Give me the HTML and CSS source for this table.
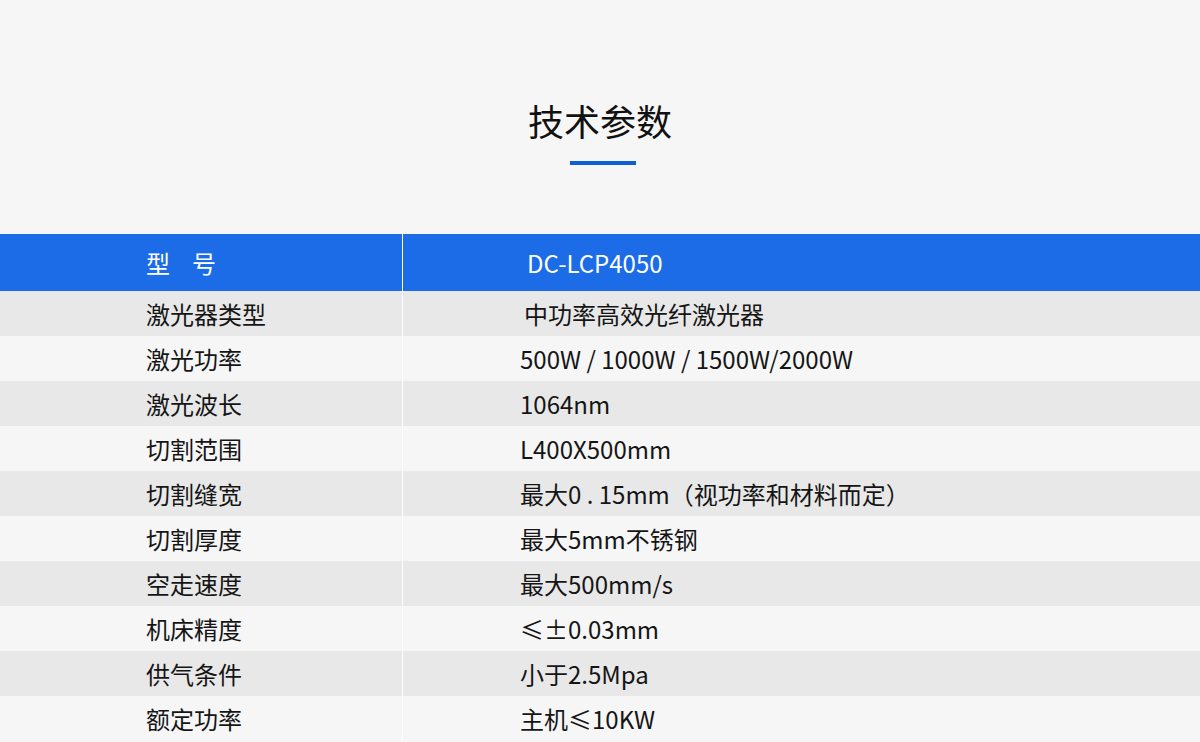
FILE: index.html
```html
<!DOCTYPE html>
<html lang="zh-CN">
<head>
<meta charset="utf-8">
<title>技术参数</title>
<link rel="stylesheet" href="styles.css">
</head>
<body>
<section class="page">
  <header class="heading">
    <h1 class="title">技术参数</h1>
    <div class="bar"></div>
  </header>
  <div class="table">
    <div class="row head"><div class="key spaced"><span>型</span><span>号</span></div><div class="val">DC-LCP4050</div></div>
    <div class="row odd"><div class="key">激光器类型</div><div class="val indent">中功率高效光纤激光器</div></div>
    <div class="row"><div class="key">激光功率</div><div class="val">500W / 1000W / 1500W/2000W</div></div>
    <div class="row odd"><div class="key">激光波长</div><div class="val">1064nm</div></div>
    <div class="row"><div class="key">切割范围</div><div class="val">L400X500mm</div></div>
    <div class="row odd"><div class="key">切割缝宽</div><div class="val">最大0 . 15mm（视功率和材料而定）</div></div>
    <div class="row"><div class="key">切割厚度</div><div class="val">最大5mm不锈钢</div></div>
    <div class="row odd"><div class="key">空走速度</div><div class="val">最大500mm/s</div></div>
    <div class="row"><div class="key">机床精度</div><div class="val">≤±0.03mm</div></div>
    <div class="row odd"><div class="key">供气条件</div><div class="val">小于2.5Mpa</div></div>
    <div class="row"><div class="key">额定功率</div><div class="val">主机≤10KW</div></div>
  </div>
</section>
</body>
</html>
```
FILE: styles.css
```css
html, body {
  margin: 0;
  padding: 0;
  background: #f6f6f6;
}
body {
  font-family: "Noto Sans CJK SC", "Noto Sans", sans-serif;
  color: #151515;
}
.page {
  width: 1200px;
  height: 742px;
  overflow: hidden;
}
.heading {
  display: flex;
  flex-direction: column;
  align-items: center;
  padding-top: 94px;
}
.title {
  margin: 0;
  font-size: 36px;
  font-weight: 400;
  line-height: 52px;
  color: #111;
}
.bar {
  flex-shrink: 0;
  margin-top: 15px;
  margin-left: 6px;
  width: 66px;
  height: 4px;
  background: #0c60d3;
}
.table {
  margin-top: 69px;
  display: flex;
  flex-direction: column;
}
.row {
  display: flex;
  height: 45px;
  flex-shrink: 0;
  align-items: stretch;
  background: #f6f6f6;
  font-size: 24px;
}
.row.odd {
  background: #e8e8e8;
}
.row.head {
  height: 57px;
  background: #1c6ce8;
  color: #fff;
}
.key {
  width: 403px;
  box-sizing: border-box;
  padding-left: 146px;
  display: flex;
  align-items: center;
  border-right: 1px solid #fff;
}
.key.spaced {
  gap: 22px;
}
.val {
  flex: 1;
  padding-left: 117px;
  display: flex;
  align-items: center;
}
.val.indent {
  padding-left: 121px;
}
.head .val {
  padding-left: 124px;
}
```
